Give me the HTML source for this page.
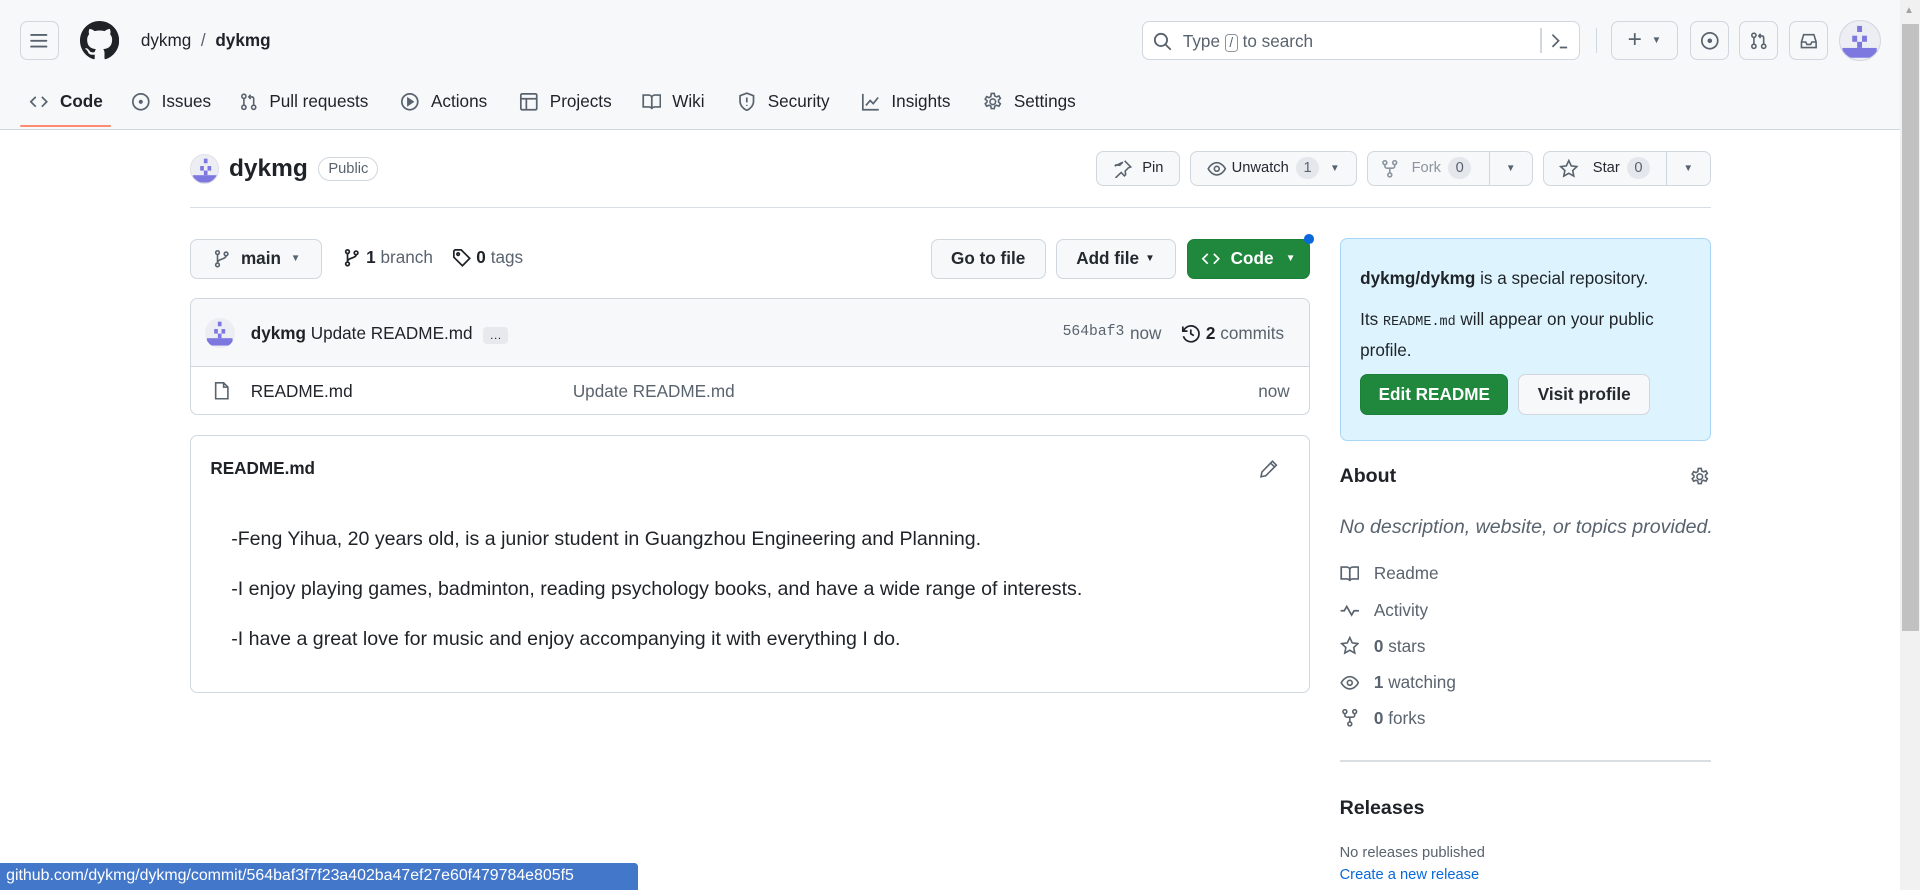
<!DOCTYPE html>
<html><head><meta charset="utf-8">
<style>
html{zoom:1.22449}
*{box-sizing:border-box;margin:0;padding:0}
body{width:1568px;height:727px;overflow:hidden;position:relative;background:#fff;font-family:"Liberation Sans",sans-serif;font-size:14px;color:#1f2328}
.a{position:absolute}
.btn{position:absolute;border:1px solid #d0d7de;border-radius:6px;background:#f6f8fa;display:flex;align-items:center;justify-content:center;font-size:14px;font-weight:600;color:#24292f}
.ib{position:absolute;border:1px solid #d0d7de;border-radius:6px;background:transparent;width:32px;height:32px;display:flex;align-items:center;justify-content:center}
svg{display:block}
.nav{position:absolute;top:73px;height:20px;display:flex;align-items:center;font-size:14px;color:#1f2328}
.nav svg{margin-right:9px}
.cnt{display:inline-block;background:#e4e8ec;border-radius:10px;padding:0 6px;font-size:12px;line-height:18px;color:#59636e;font-weight:500;margin-left:6px}
.side{position:absolute;left:1094px;display:flex;align-items:center;font-size:14px;color:#59636e}
.side svg{margin-right:12px}
</style></head><body>
<div class="a" style="left:0;top:0;width:1552px;height:106px;background:#f6f8fa;border-bottom:1px solid #d0d7de"></div>
<div class="ib" style="left:16px;top:17px"><svg width="16" height="16" viewBox="0 0 16 16" fill="#59636e"><rect x="1" y="2.5" width="14" height="1.5" rx=".75"/><rect x="1" y="7.25" width="14" height="1.5" rx=".75"/><rect x="1" y="12" width="14" height="1.5" rx=".75"/></svg></div>
<svg class="a" style="left:65px;top:17px" width="32" height="32" viewBox="0 0 16 16" fill="#1f2328"><path d="M8 0C3.58 0 0 3.58 0 8c0 3.54 2.290 6.530 5.470 7.590.4.07.55-.17.55-.38 0-.19-.01-.82-.01-1.490-2.010.37-2.530-.49-2.690-.94-.09-.23-.48-.94-.82-1.130-.28-.15-.68-.52-.01-.53.63-.01 1.080.58 1.230.82.72 1.210 1.870.87 2.330.66.07-.52.28-.87.51-1.070-1.780-.2-3.640-.89-3.640-3.950 0-.87.31-1.590.82-2.150-.08-.2-.36-1.020.08-2.120 0 0 .67-.21 2.2.82.64-.18 1.320-.27 2-.27.68 0 1.360.09 2 .27 1.530-1.040 2.2-.82 2.2-.82.44 1.1.16 1.920.08 2.120.51.56.82 1.270.82 2.150 0 3.070-1.870 3.750-3.650 3.950.29.25.54.73.54 1.480 0 1.070-.01 1.930-.01 2.2 0 .21.15.46.55.38A8.013 8.013 0 0016 8c0-4.420-3.580-8-8-8z"/></svg>
<div class="a" style="left:115px;top:24px;font-size:14px;line-height:18px">dykmg <span style="color:#59636e;margin:0 4px">/</span> <b style="font-weight:600">dykmg</b></div>
<div class="a" style="left:933px;top:17px;width:357px;height:32px;border:1px solid #d0d7de;border-radius:6px;background:#fff"></div>
<svg class="a" style="left:942px;top:26px" width="16" height="16" viewBox="0 0 16 16" fill="none" stroke="#59636e" stroke-width="1.5"><circle cx="6.5" cy="6.5" r="5"/><path d="M10.3 10.3L14.5 14.5"/></svg>
<div class="a" style="left:966px;top:25px;font-size:14px;color:#59636e">Type <span style="display:inline-block;border:1px solid #8c959f;border-radius:3px;font-size:11px;line-height:13px;padding:0 3px">/</span> to search</div>
<div class="a" style="left:1258px;top:23px;width:1px;height:20px;background:#d0d7de"></div>
<svg class="a" style="left:1266px;top:25px" width="16" height="16" viewBox="0 0 16 16" fill="none" stroke="#59636e" stroke-width="1.4"><path d="M2 3l5 5-5 5M8 13.5h6"/></svg>
<div class="a" style="left:1303px;top:23px;width:1px;height:20px;background:#d0d7de"></div>
<div class="ib" style="left:1316px;top:17px;width:54px"><span style="font-size:20px;color:#59636e;line-height:20px">+</span><span style="font-size:8px;color:#59636e;margin-left:8px">▼</span></div>
<div class="ib" style="left:1380px;top:17px"><svg width="16" height="16" viewBox="0 0 16 16" fill="none" stroke="#59636e" stroke-width="1.4"><circle cx="8" cy="8" r="6.5"/><circle cx="8" cy="8" r="1.2" fill="#59636e"/></svg></div>
<div class="ib" style="left:1420px;top:17px"><svg width="16" height="16" viewBox="0 0 16 16" fill="none" stroke="#59636e" stroke-width="1.3"><circle cx="4" cy="3.5" r="1.7"/><circle cx="4" cy="12.5" r="1.7"/><circle cx="12" cy="12.5" r="1.7"/><path d="M4 5.2v5.6M12 10.8V5.5c0-1-.6-1.500-1.500-1.500H8M9.5 2.3L8 4l1.500 1.700"/></svg></div>
<div class="ib" style="left:1461px;top:17px"><svg width="16" height="16" viewBox="0 0 16 16" fill="none" stroke="#59636e" stroke-width="1.3"><path d="M2 9l1.8-6h8.4L14 9v4.5H2z M2 9h3.5l1 2h3l1-2H14"/></svg></div>
<div class="a" style="left:1502px;top:16px;width:34px;height:34px;border-radius:50%;background:#eceef4;border:1px solid #d0d7de;overflow:hidden"><svg width="32" height="32" viewBox="0 0 32 32" fill="#7d78e0"><rect x="14" y="4" width="4" height="5"/><rect x="10" y="12" width="4" height="5"/><rect x="18" y="12" width="4" height="5"/><rect x="14" y="17" width="4" height="5"/><rect x="2" y="22" width="28" height="8"/></svg></div>

<div class="nav" style="left:24px;font-weight:600"><svg width="16" height="16" viewBox="0 0 16 16" fill="none" stroke="#59636e" stroke-width="1.4"><path d="M5.5 4L1.5 8l4 4M10.5 4l4 4-4 4"/></svg>Code</div>
<div class="a" style="left:16px;top:102px;width:75px;height:2px;background:#fd8c73;border-radius:2px"></div>
<div class="nav" style="left:107px"><svg width="16" height="16" viewBox="0 0 16 16" fill="none" stroke="#59636e" stroke-width="1.4"><circle cx="8" cy="8" r="6.5"/><circle cx="8" cy="8" r="1" fill="#59636e"/></svg>Issues</div>
<div class="nav" style="left:195px"><svg width="16" height="16" viewBox="0 0 16 16" fill="none" stroke="#59636e" stroke-width="1.3"><circle cx="4" cy="3.5" r="1.7"/><circle cx="4" cy="12.5" r="1.7"/><circle cx="12" cy="12.5" r="1.7"/><path d="M4 5.2v5.6M12 10.8V5.5c0-1-.6-1.500-1.500-1.500H8M9.5 2.3L8 4l1.500 1.700"/></svg>Pull requests</div>
<div class="nav" style="left:327px"><svg width="16" height="16" viewBox="0 0 16 16" fill="none" stroke="#59636e" stroke-width="1.4"><circle cx="8" cy="8" r="6.5"/><path d="M6.5 5.3v5.4L10.5 8z" fill="#59636e"/></svg>Actions</div>
<div class="nav" style="left:424px"><svg width="16" height="16" viewBox="0 0 16 16" fill="none" stroke="#59636e" stroke-width="1.4"><rect x="1.5" y="1.5" width="13" height="13" rx="1"/><path d="M1.5 5.5h13M6 5.5v9"/></svg>Projects</div>
<div class="nav" style="left:524px"><svg width="16" height="16" viewBox="0 0 16 16" fill="none" stroke="#59636e" stroke-width="1.4"><path d="M1 2.5h4.5c1.4 0 2.5 1 2.5 2.3V14c0-1-1-1.8-2.3-1.8H1zM15 2.5h-4.5C9.1 2.5 8 3.5 8 4.8V14c0-1 1-1.8 2.3-1.8H15z"/></svg>Wiki</div>
<div class="nav" style="left:602px"><svg width="16" height="16" viewBox="0 0 16 16" fill="none" stroke="#59636e" stroke-width="1.4"><path d="M8 1L2.5 3v4.5C2.5 11 5 13.7 8 15c3-1.3 5.5-4 5.5-7.5V3z"/><path d="M8 4.5v4M8 10.5v.8"/></svg>Security</div>
<div class="nav" style="left:703px"><svg width="16" height="16" viewBox="0 0 16 16" fill="none" stroke="#59636e" stroke-width="1.4"><path d="M1.5 1.5v13h13M4 11l3.5-4 2.5 2.5 4-5"/></svg>Insights</div>
<div class="nav" style="left:803px"><svg width="16" height="16" viewBox="0 0 16 16" fill="none" stroke="#59636e" stroke-width="1.3"><circle cx="8" cy="8" r="2.3"/><path d="M6.8 1.2h2.4l.4 2 1.5.8 1.9-.8 1.2 2-1.5 1.4v1.6l1.5 1.4-1.2 2-1.9-.8-1.5.8-.4 2H6.8l-.4-2-1.5-.8-1.9.8-1.2-2 1.5-1.4V7.2L1.8 5.8l1.2-2 1.9.8 1.5-.8z"/></svg>Settings</div>

<div class="a" style="left:155px;top:126px;width:24px;height:24px;border-radius:50%;background:#eceef4;overflow:hidden;border:1px solid #e0e0e8"><svg width="24" height="24" viewBox="0 0 32 32" fill="#7d78e0"><rect x="14" y="4" width="4" height="5"/><rect x="10" y="12" width="4" height="5"/><rect x="18" y="12" width="4" height="5"/><rect x="14" y="17" width="4" height="5"/><rect x="2" y="22" width="28" height="8"/></svg></div>
<div class="a" style="left:187px;top:126px;font-size:20px;line-height:24px;font-weight:600">dykmg</div>
<div class="a" style="left:260px;top:128px;width:49px;height:20px;border:1px solid #d0d7de;border-radius:10px;font-size:12px;color:#59636e;display:flex;align-items:center;justify-content:center;font-weight:500">Public</div>

<div class="btn" style="left:895px;top:123px;width:69px;height:29px;font-weight:500;font-size:12px"><svg width="16" height="16" viewBox="0 0 16 16" fill="none" stroke="#59636e" stroke-width="1.3" style="margin-right:8px"><path d="M9.5 1.5l5 5-2 .8-2.5 2.5.3 3-1 1L6.7 11 2 15.5M1.5 5.8l1-1 3 .3 2.5-2.5z"/></svg>Pin</div>
<div class="btn" style="left:972px;top:123px;width:136px;height:29px;font-weight:500;font-size:12px"><svg width="16" height="16" viewBox="0 0 16 16" fill="none" stroke="#59636e" stroke-width="1.3" style="margin-right:4px"><path d="M1 8s2.5-5 7-5 7 5 7 5-2.5 5-7 5-7-5-7-5z"/><circle cx="8" cy="8" r="2"/></svg>Unwatch<span class="cnt">1</span><span style="font-size:8px;margin-left:9px;color:#59636e">▼</span></div>
<div class="btn" style="left:1116px;top:123px;width:136px;height:29px;font-weight:500;font-size:12px;justify-content:flex-start;padding-left:10px;color:#8c959f"><svg width="16" height="16" viewBox="0 0 16 16" fill="none" stroke="#8c959f" stroke-width="1.3" style="margin-right:10px"><circle cx="4" cy="3" r="1.6"/><circle cx="12" cy="3" r="1.6"/><circle cx="8" cy="13" r="1.6"/><path d="M4 4.6v1.2c0 1 .7 1.7 1.7 1.7h4.6c1 0 1.7-.7 1.7-1.7V4.6M8 7.5v3.9"/></svg>Fork<span class="cnt">0</span><span style="position:absolute;left:99px;top:0;height:27px;border-left:1px solid #d0d7de"></span><span style="position:absolute;left:113px;font-size:8px;color:#59636e">▼</span></div>
<div class="btn" style="left:1260px;top:123px;width:137px;height:29px;font-weight:500;font-size:12px;justify-content:flex-start;padding-left:12px"><svg width="16" height="16" viewBox="0 0 16 16" fill="none" stroke="#59636e" stroke-width="1.3" style="margin-right:12px"><path d="M8 1.3l2 4.3 4.6.6-3.4 3.2.9 4.6L8 11.7 3.9 14l.9-4.6L1.4 6.2 6 5.6z"/></svg>Star<span class="cnt">0</span><span style="position:absolute;left:100px;top:0;height:27px;border-left:1px solid #d0d7de"></span><span style="position:absolute;left:114px;font-size:8px;color:#59636e">▼</span></div>
<div class="a" style="left:155px;top:169px;width:1242px;height:1px;background:#d8dee4"></div>

<div class="btn" style="left:155px;top:195px;width:108px;height:33px;justify-content:flex-start;padding-left:17px"><svg width="16" height="16" viewBox="0 0 16 16" fill="none" stroke="#59636e" stroke-width="1.3" style="margin-right:8px"><circle cx="4.5" cy="3" r="1.5"/><circle cx="4.5" cy="13" r="1.5"/><circle cx="11.5" cy="4" r="1.5"/><path d="M4.5 4.5v7M11.5 5.5c0 3-7 2.5-7 5.5"/></svg>main<span style="font-size:8px;margin-left:8px;color:#59636e">▼</span></div>
<div class="a" style="left:279px;top:202px;display:flex;align-items:center;font-size:14px;color:#59636e"><svg width="16" height="16" viewBox="0 0 16 16" fill="none" stroke="#1f2328" stroke-width="1.4" style="margin-right:4px"><circle cx="4.5" cy="3" r="1.5"/><circle cx="4.5" cy="13" r="1.5"/><circle cx="11.5" cy="4" r="1.5"/><path d="M4.5 4.5v7M11.5 5.5c0 3-7 2.5-7 5.5"/></svg><b style="color:#1f2328;margin-right:4px">1</b>branch</div>
<div class="a" style="left:369px;top:202px;display:flex;align-items:center;font-size:14px;color:#59636e"><svg width="16" height="16" viewBox="0 0 16 16" fill="none" stroke="#1f2328" stroke-width="1.4" style="margin-right:4px"><path d="M1.5 2.5v5l7 7 6-6-7-7h-5z"/><circle cx="5" cy="5" r="1"/></svg><b style="color:#1f2328;margin-right:4px">0</b>tags</div>
<div class="btn" style="left:760px;top:195px;width:94px;height:33px">Go to file</div>
<div class="btn" style="left:862px;top:195px;width:98px;height:33px">Add file<span style="font-size:8px;margin-left:5px">▼</span></div>
<div class="btn" style="left:969px;top:195px;width:101px;height:33px;background:#1f883d;border-color:#1a7f37;color:#fff"><svg width="16" height="16" viewBox="0 0 16 16" fill="none" stroke="#fff" stroke-width="1.4" style="margin-right:8px"><path d="M5.5 4L1.5 8l4 4M10.5 4l4 4-4 4"/></svg>Code<span style="font-size:8px;margin-left:10px">▼</span></div>
<div class="a" style="left:1065px;top:191px;width:8px;height:8px;border-radius:50%;background:#0969da"></div>

<div class="a" style="left:155px;top:243px;width:915px;height:96px;border:1px solid #d0d7de;border-radius:6px;overflow:hidden">
 <div style="height:56px;background:#f6f8fa;border-bottom:1px solid #d0d7de;position:relative">
  <div class="a" style="left:12px;top:16px;width:24px;height:24px;border-radius:50%;background:#eceef4;overflow:hidden"><svg width="24" height="24" viewBox="0 0 32 32" fill="#7d78e0"><rect x="14" y="4" width="4" height="5"/><rect x="10" y="12" width="4" height="5"/><rect x="18" y="12" width="4" height="5"/><rect x="14" y="17" width="4" height="5"/><rect x="2" y="22" width="28" height="8"/></svg></div>
  <div class="a" style="left:49px;top:20px;font-size:14px"><b style="font-weight:600">dykmg</b> Update README.md <span style="display:inline-block;background:#e6eaef;border-radius:3px;font-size:10px;padding:0 5px;line-height:14px;margin-left:5px">…</span></div>
  <div class="a" style="left:712px;top:21px;font-size:12px;color:#59636e;font-family:'Liberation Mono',monospace">564baf3</div>
  <div class="a" style="left:767px;top:20px;font-size:14px;color:#59636e">now</div>
  <div class="a" style="left:809px;top:20px;display:flex;align-items:center;font-size:14px;color:#59636e"><svg width="16" height="16" viewBox="0 0 16 16" fill="none" stroke="#1f2328" stroke-width="1.4" style="margin-right:4px"><path d="M2.2 5.5A6.5 6.5 0 112 10M1.5 2v3.8h3.8M8 4.5V8l2.5 1.5"/></svg><b style="color:#1f2328;margin-right:4px">2</b>commits</div>
 </div>
 <div style="height:38px;position:relative">
  <svg class="a" style="left:17px;top:11px" width="16" height="16" viewBox="0 0 16 16" fill="none" stroke="#59636e" stroke-width="1.3"><path d="M3 1.5h6.5l3.5 3.5v9.5H3z M9.5 1.5V5H13"/></svg>
  <div class="a" style="left:49px;top:11px;font-size:14px">README.md</div>
  <div class="a" style="left:312px;top:11px;font-size:14px;color:#59636e">Update README.md</div>
  <div class="a" style="right:16px;top:11px;font-size:14px;color:#59636e">now</div>
 </div>
</div>

<div class="a" style="left:155px;top:355px;width:915px;height:211px;border:1px solid #d0d7de;border-radius:6px">
 <div class="a" style="left:16px;top:18px;font-size:14px;font-weight:600">README.md</div>
 <svg class="a" style="left:872px;top:19px" width="16" height="16" viewBox="0 0 16 16" fill="none" stroke="#59636e" stroke-width="1.3"><path d="M11 1.8l3.2 3.2-8.7 8.7-3.9.8.8-3.9z M9.5 3.3l3.2 3.2"/></svg>
 <div class="a" style="left:33px;top:73px;font-size:16px;line-height:24px">-Feng Yihua, 20 years old, is a junior student in Guangzhou Engineering and Planning.</div>
 <div class="a" style="left:33px;top:114px;font-size:16px;line-height:24px">-I enjoy playing games, badminton, reading psychology books, and have a wide range of interests.</div>
 <div class="a" style="left:33px;top:155px;font-size:16px;line-height:24px">-I have a great love for music and enjoy accompanying it with everything I do.</div>
</div>

<div class="a" style="left:1094px;top:194px;width:303px;height:166px;background:#ddf4ff;border:1px solid #a9d6f7;border-radius:6px">
 <div class="a" style="left:16px;top:24px;font-size:14px"><b style="font-weight:600">dykmg/dykmg</b> is a special repository.</div>
 <div class="a" style="left:16px;top:55px;font-size:14px;line-height:22px;width:270px">Its <span style="font-family:'Liberation Mono',monospace;font-size:11px">README.md</span> will appear on your public profile.</div>
 <div class="btn" style="left:16px;top:111px;width:121px;height:33px;background:#1f883d;border-color:#1a7f37;color:#fff">Edit README</div>
 <div class="btn" style="left:145px;top:111px;width:108px;height:33px">Visit profile</div>
</div>
<div class="a" style="left:1094px;top:380px;font-size:16px;font-weight:600">About</div>
<svg class="a" style="left:1380px;top:381px" width="16" height="16" viewBox="0 0 16 16" fill="none" stroke="#59636e" stroke-width="1.3"><circle cx="8" cy="8" r="2.3"/><path d="M6.8 1.2h2.4l.4 2 1.5.8 1.9-.8 1.2 2-1.5 1.4v1.6l1.5 1.4-1.2 2-1.9-.8-1.5.8-.4 2H6.8l-.4-2-1.5-.8-1.9.8-1.2-2 1.5-1.4V7.2L1.8 5.8l1.2-2 1.9.8 1.5-.8z"/></svg>
<div class="a" style="left:1094px;top:421px;font-size:16px;font-style:italic;color:#59636e">No description, website, or topics provided.</div>
<div class="side" style="top:460px"><svg width="16" height="16" viewBox="0 0 16 16" fill="none" stroke="#59636e" stroke-width="1.4"><path d="M1 2.5h4.5c1.4 0 2.5 1 2.5 2.3V14c0-1-1-1.8-2.3-1.8H1zM15 2.5h-4.5C9.1 2.5 8 3.5 8 4.8V14c0-1 1-1.8 2.3-1.8H15z"/></svg>Readme</div>
<div class="side" style="top:490px"><svg width="16" height="16" viewBox="0 0 16 16" fill="none" stroke="#59636e" stroke-width="1.4"><path d="M0.5 8h3l2-3.5 4 7 2-3.5h4"/></svg>Activity</div>
<div class="side" style="top:519px"><svg width="16" height="16" viewBox="0 0 16 16" fill="none" stroke="#59636e" stroke-width="1.3"><path d="M8 1.3l2 4.3 4.6.6-3.4 3.2.9 4.6L8 11.7 3.9 14l.9-4.6L1.4 6.2 6 5.6z"/></svg><b style="color:#59636e;margin-right:4px">0</b>stars</div>
<div class="side" style="top:549px"><svg width="16" height="16" viewBox="0 0 16 16" fill="none" stroke="#59636e" stroke-width="1.3"><path d="M1 8s2.5-5 7-5 7 5 7 5-2.5 5-7 5-7-5-7-5z"/><circle cx="8" cy="8" r="2"/></svg><b style="color:#59636e;margin-right:4px">1</b>watching</div>
<div class="side" style="top:578px"><svg width="16" height="16" viewBox="0 0 16 16" fill="none" stroke="#59636e" stroke-width="1.3"><circle cx="4" cy="3" r="1.6"/><circle cx="12" cy="3" r="1.6"/><circle cx="8" cy="13" r="1.6"/><path d="M4 4.6v1.2c0 1 .7 1.7 1.7 1.7h4.6c1 0 1.7-.7 1.7-1.7V4.6M8 7.5v3.9"/></svg><b style="color:#59636e;margin-right:4px">0</b>forks</div>
<div class="a" style="left:1094px;top:621px;width:303px;height:1px;background:#d8dee4"></div>
<div class="a" style="left:1094px;top:651px;font-size:16px;font-weight:600">Releases</div>
<div class="a" style="left:1094px;top:690px;font-size:12px;color:#59636e">No releases published</div>
<div class="a" style="left:1094px;top:708px;font-size:12px;color:#0969da">Create a new release</div>

<div class="a" style="left:1552px;top:0;width:16px;height:727px;background:#f1f1f1"></div>
<div class="a" style="left:1553px;top:20px;width:14px;height:495px;background:#c1c1c1"></div>
<div class="a" style="left:1555px;top:4px;font-size:8px;color:#a3a3a3">▲</div>
<div class="a" style="left:0;top:705px;width:521px;height:22px;background:#4377c9;border-top-right-radius:3px;color:#fff;font-size:13px;line-height:22px;padding-left:5px">github.com/dykmg/dykmg/commit/564baf3f7f23a402ba47ef27e60f479784e805f5</div>
</body></html>
